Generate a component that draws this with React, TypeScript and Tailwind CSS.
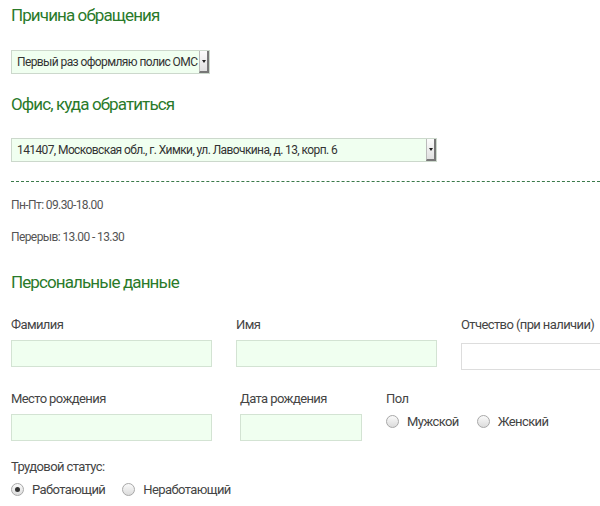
import React from "react";

const Radio = ({ checked, label }: { checked?: boolean; label: string }) => (
  <label className="flex items-center gap-[8px]">
    <span className="w-[13px] h-[13px] rounded-full border border-[#a8a8a8] bg-gradient-to-b from-[#fafafa] to-[#dcdcdc] flex items-center justify-center">
      {checked && <span className="w-[5px] h-[5px] rounded-full bg-[#333]" />}
    </span>
    <span>{label}</span>
  </label>
);

const Select = ({ text, w }: { text: string; w: string }) => (
  <div className={`${w} h-[24px] border border-[#ccd8cc] bg-[#f0fff0] flex items-center justify-between pl-[5px] text-[12px] text-[#333] whitespace-nowrap`}>
    <span>{text}</span>
    <span className="shrink-0 w-[10px] h-[22px] bg-gradient-to-b from-[#fcfcfc] to-[#e0e0e0] border-l border-[#bbb] border-r-2 border-r-[#777] border-b-2 border-b-[#777] flex items-center justify-center">
      <span className="w-0 h-0 border-l-[2.5px] border-r-[2.5px] border-t-[3px] border-l-transparent border-r-transparent border-t-[#222]" />
    </span>
  </div>
);

const Field = ({ label, w }: { label: string; w: string }) => (
  <div className="flex flex-col gap-[7px]">
    <div className="text-[13px] text-[#444] leading-[16px]">{label}</div>
    <div className={`${w} h-[27px] border border-[#d3e3d3] bg-[#f0fff0]`} />
  </div>
);

export default function App() {
  return (
    <div className="w-[600px] h-[506px] overflow-hidden bg-white pl-[11px] tracking-[-0.6px]" style={{ fontFamily: "Roboto, 'Liberation Sans', sans-serif" }}>
      <h2 className="pt-[5px] text-[17px] leading-[20px] text-[#2a7a2a] tracking-[-0.9px]">Причина обращения</h2>
      <div className="mt-[25px]"><Select w="w-[199px]" text="Первый раз оформляю полис ОМС" /></div>
      <h2 className="mt-[20px] text-[17px] leading-[20px] text-[#2a7a2a] tracking-[-0.9px]">Офис, куда обратиться</h2>
      <div className="mt-[24px]"><Select w="w-[426px]" text="141407, Московская обл., г. Химки, ул. Лавочкина, д. 13, корп. 6" /></div>
      <div className="mt-[19px] border-t border-dashed border-[#3b7a4a]" />
      <div className="mt-[15px] text-[12px] text-[#555] leading-[16px]">Пн-Пт: 09.30-18.00</div>
      <div className="mt-[16px] text-[12px] text-[#555] leading-[16px]">Перерыв: 13.00 - 13.30</div>
      <h2 className="mt-[27px] text-[17px] leading-[20px] text-[#2a7a2a] tracking-[-0.9px]">Персональные данные</h2>
      <div className="mt-[25px] flex gap-[24px]">
        <Field label="Фамилия" w="w-[201px]" />
        <Field label="Имя" w="w-[201px]" />
        <div className="flex flex-col gap-[10px]">
          <div className="text-[13px] text-[#444] leading-[16px]">Отчество (при наличии)</div>
          <div className="w-[200px] h-[27px] border border-[#ddd] bg-white" />
        </div>
      </div>
      <div className="mt-[21px] flex">
        <Field label="Место рождения" w="w-[201px]" />
        <div className="ml-[28px]"><Field label="Дата рождения" w="w-[122px]" /></div>
        <div className="ml-[24px] flex flex-col gap-[5px] text-[13px] text-[#444]">
          <div className="leading-[16px]">Пол</div>
          <div className="flex gap-[18px]">
            <Radio label="Мужской" />
            <Radio label="Женский" />
          </div>
        </div>
      </div>
      <div className="mt-[18px] text-[13px] text-[#444] leading-[16px]">Трудовой статус:</div>
      <div className="mt-[5px] flex gap-[17px] text-[13px] text-[#444]">
        <Radio checked label="Работающий" />
        <Radio label="Неработающий" />
      </div>
    </div>
  );
}
